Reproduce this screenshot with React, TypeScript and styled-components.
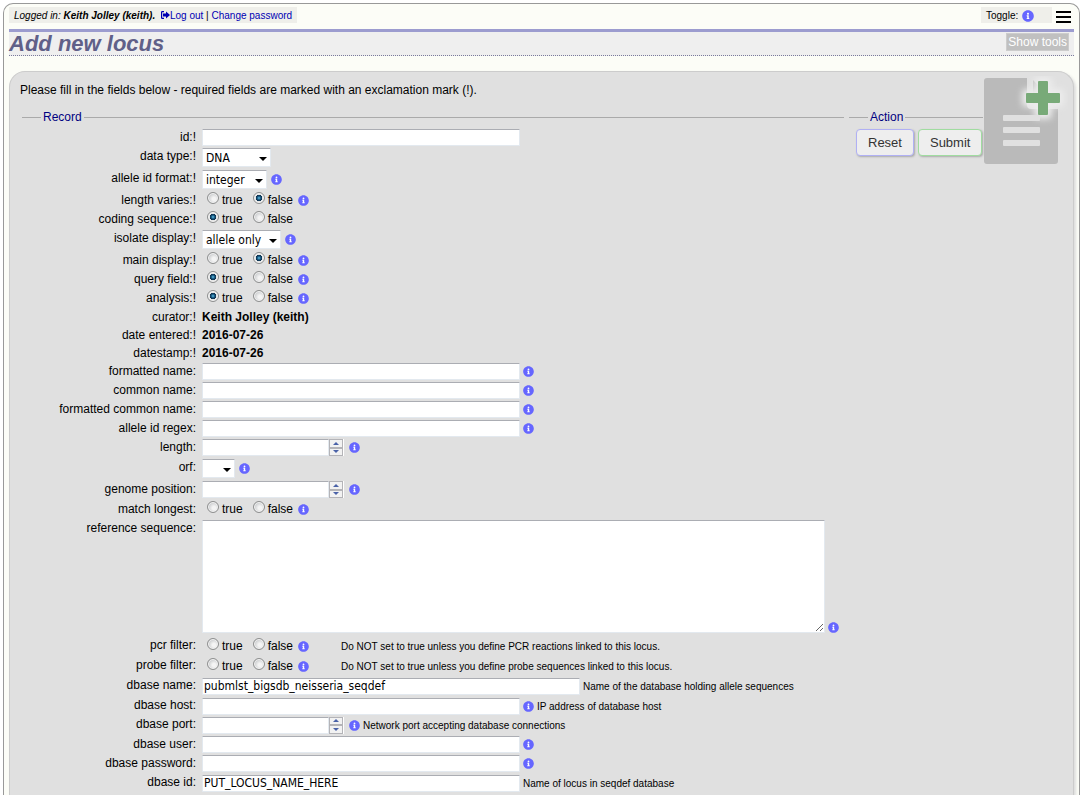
import React from "react";
import styled, { createGlobalStyle, css } from "styled-components";
import { FaInfoCircle } from "react-icons/fa";

const GlobalStyle = createGlobalStyle`
  *, *::before, *::after { box-sizing: border-box; }
  body {
    margin: 0;
    background: #fff;
    color: #000;
    font-family: "Liberation Sans", Arial, sans-serif;
    font-size: 12px;
    line-height: 16px;
  }
`;

const Frame = styled.div`
  display: flex;
  flex-direction: column;
  min-height: calc(100vh - 3px);
  margin: 3px 3px 0;
  padding: 3px 5px 0;
  background: #fcfdf7;
  border: 1px solid #999;
  border-bottom: 0;
  border-radius: 10px 10px 0 0;
`;

const TopBar = styled.div`
  display: flex;
  align-items: flex-start;
  height: 22px;
  font-size: 10px;
`;

const Chip = styled.div`
  height: 16px;
  padding: 0 5px;
  background: #efefea;
  line-height: 18px;
  white-space: nowrap;
`;

const ToggleChip = styled(Chip)`
  display: flex;
  align-items: center;
  gap: 4px;
  width: 71px;
  margin-left: auto;
  padding-top: 2px;
`;

const TopLink = styled.a`
  color: #0000b4;
  text-decoration: none;
  svg { margin-left: 3px; }
`;

const MenuButton = styled.button`
  width: 16px;
  height: 16px;
  margin: 2px 2px 0 4px;
  padding: 0;
  border: 0;
  background: none;
  svg { display: block; }
`;

const TitleBar = styled.header`
  display: flex;
  justify-content: space-between;
  align-items: flex-start;
  height: 27px;
  background: #efefef;
  border-top: 3px solid #9c9ccf;
  border-bottom: 1px dotted #7a7a9c;
`;

const Title = styled.h1`
  margin: 0;
  color: #606088;
  font-size: 22px;
  line-height: 24px;
  font-style: italic;
`;

const ToolsButton = styled.button`
  height: 18px;
  margin: 1px 5px 0 0;
  padding: 0 1px;
  border: 1px solid #ccc;
  background: #c0c0c0;
  color: #fff;
  font: inherit;
`;

const Box = styled.main`
  position: relative;
  flex: 1;
  margin-top: 15px;
  padding: 10px 10px 0;
  background: #e0e0e0;
  border: 1px solid #ccc;
  border-bottom: 0;
  border-radius: 16px 16px 0 0;
  box-shadow: 2px 2px 3px #ddd;
`;

const Intro = styled.p`
  margin: 0 0 11px;
`;

const Columns = styled.form`
  display: flex;
  align-items: flex-start;
  gap: 5px;
  padding-left: 2px;
`;

const Fieldset = styled.fieldset`
  min-width: 0;
  margin: 0;
  padding: 4px 5px 2px 0;
  border: 0;
  border-top: 1px solid #aaa;
`;

const ActionSet = styled(Fieldset)`
  display: flex;
  gap: 4px;
  padding: 4px 1px 4px 7px;
`;

const Legend = styled.legend<{ $indent: number }>`
  margin-left: ${(p) => p.$indent}px;
  padding: 0 2px;
  color: #000080;
`;

const ActionButton = styled.button<{ $edge: string }>`
  height: 27px;
  padding: 0 11px;
  background: #eee;
  border: 1px solid ${(p) => p.$edge};
  border-radius: 4px;
  box-shadow: 1px 1px 2px #aaa;
  color: #333;
  font: 13px "Liberation Sans", Arial, sans-serif;
`;

const PageIcon = styled.svg`
  position: absolute;
  top: 4px;
  right: 5px;
`;

const List = styled.ul`
  margin: 0;
  padding: 0;
  list-style: none;
`;

const rowHeights = { text: 18, input: 19, radio: 19, number: 20, note: 20, select: 22, area: 117 };
type Kind = keyof typeof rowHeights;

const Row = styled.li<{ $kind: Kind }>`
  display: flex;
  align-items: flex-start;
  gap: 6px;
  height: ${(p) => rowHeights[p.$kind]}px;
`;

const labelStyle = css`
  flex: none;
  width: 174px;
  text-align: right;
`;
const Label = styled.label`${labelStyle}`;
const Caption = styled.span`${labelStyle}`;

const Control = styled.div<{ $end?: boolean }>`
  display: flex;
  align-items: ${(p) => (p.$end ? "flex-end" : "center")};
  gap: 3px;
`;

const fieldStyle = css`
  margin: 0;
  border: 1px solid #e3e9ef;
  border-top-color: #abadb3;
  border-radius: 1px;
  background: #fff;
  color: #000;
  font: 12px "DejaVu Sans Condensed", Tahoma, sans-serif;
  outline: 0;
`;

const TextBox = styled.input<{ $wide?: boolean }>`
  ${fieldStyle}
  width: ${(p) => (p.$wide ? 378 : 318)}px;
  height: 17px;
  padding: 0 1px;
`;

const Area = styled.textarea`
  ${fieldStyle}
  display: block;
  width: 623px;
  height: 113px;
`;

const NumberWrap = styled.span`
  display: flex;
  margin-right: 2px;
`;

const NumberBox = styled.input`
  ${fieldStyle}
  width: 127px;
  height: 17px;
  padding: 0 1px;
  appearance: textfield;
  &::-webkit-inner-spin-button { appearance: none; }
`;

const Spinner = styled.span`
  display: flex;
  flex-direction: column;
  width: 15px;
  height: 17px;
  padding-right: 1px;
  background: #fff;
`;

const SpinButton = styled.button`
  display: flex;
  flex: 1;
  align-items: center;
  justify-content: center;
  min-height: 0;
  padding: 0;
  border: 1px solid #b4b4b8;
  background: #f2f2f2;
`;

const SelectWrap = styled.span`
  position: relative;
  display: flex;
  margin-right: 1px;
  &::after {
    content: "";
    position: absolute;
    top: 9px;
    right: 4px;
    border: 4px solid transparent;
    border-top-color: #000;
    border-bottom: 0;
    pointer-events: none;
  }
`;

const Select = styled.select<{ $width: number }>`
  ${fieldStyle}
  appearance: none;
  width: ${(p) => p.$width}px;
  height: 19px;
  padding: 0 3px;
`;

const Choice = styled.label`
  display: inline-flex;
  align-items: center;
  gap: 3px;
  height: 16px;
  margin-left: 5px;
  padding-right: 2px;
`;

const Radio = styled.input`
  appearance: none;
  width: 12px;
  height: 12px;
  margin: 0 0 4px;
  border: 1px solid #8e8f8f;
  border-radius: 50%;
  background: radial-gradient(circle at 60% 60%, #f4f4f4 20%, #c4c6c8 75%);
  box-shadow: inset 0 0 0 1px #f4f4f4;
  &:checked {
    background: radial-gradient(circle at 50% 50%, #5fc3ea 0, #17547c 25%, #0b2f4c 42%, #e4e4e4 50%);
  }
`;

const Value = styled.strong``;

const Note = styled.span<{ $far?: boolean }>`
  margin-left: ${(p) => (p.$far ? 29 : 0)}px;
  padding-top: 2px;
  font-size: 10px;
  line-height: 16px;
  white-space: nowrap;
`;

const InfoButton = styled.button`
  display: flex;
  padding: 0;
  border: 0;
  border-radius: 50%;
  background: radial-gradient(circle, #fff 50%, transparent 55%);
  color: #66f;
`;

const Info = ({ size = 11 }: { size?: number }) => (
  <InfoButton type="button" aria-label="Information">
    <FaInfoCircle size={size} />
  </InfoButton>
);

type RowData = {
  label: string;
  kind: Kind;
  tall?: boolean;
  wide?: boolean;
  info?: boolean;
  note?: string;
  value?: string;
  width?: number;
};

const rows: RowData[] = [
  { label: "id:!", kind: "input" },
  { label: "data type:!", kind: "select", value: "DNA", width: 69 },
  { label: "allele id format:!", kind: "select", value: "integer", width: 65, info: true },
  { label: "length varies:!", kind: "radio", value: "false", info: true },
  { label: "coding sequence:!", kind: "radio", value: "true" },
  { label: "isolate display:!", kind: "select", value: "allele only", width: 79, info: true },
  { label: "main display:!", kind: "radio", value: "false", info: true },
  { label: "query field:!", kind: "radio", value: "true", info: true },
  { label: "analysis:!", kind: "radio", value: "true", info: true },
  { label: "curator:!", kind: "text", value: "Keith Jolley (keith)" },
  { label: "date entered:!", kind: "text", value: "2016-07-26" },
  { label: "datestamp:!", kind: "text", value: "2016-07-26" },
  { label: "formatted name:", kind: "input", info: true },
  { label: "common name:", kind: "input", info: true },
  { label: "formatted common name:", kind: "input", info: true },
  { label: "allele id regex:", kind: "input", info: true },
  { label: "length:", kind: "number", info: true },
  { label: "orf:", kind: "select", value: "", width: 33, info: true },
  { label: "genome position:", kind: "number", info: true },
  { label: "match longest:", kind: "radio", info: true },
  { label: "reference sequence:", kind: "area", info: true },
  { label: "pcr filter:", kind: "radio", tall: true, info: true, note: "Do NOT set to true unless you define PCR reactions linked to this locus." },
  { label: "probe filter:", kind: "radio", tall: true, info: true, note: "Do NOT set to true unless you define probe sequences linked to this locus." },
  { label: "dbase name:", kind: "input", tall: true, wide: true, value: "pubmlst_bigsdb_neisseria_seqdef", note: "Name of the database holding allele sequences" },
  { label: "dbase host:", kind: "input", info: true, note: "IP address of database host" },
  { label: "dbase port:", kind: "number", info: true, note: "Network port accepting database connections" },
  { label: "dbase user:", kind: "input", info: true },
  { label: "dbase password:", kind: "input", info: true },
  { label: "dbase id:", kind: "input", value: "PUT_LOCUS_NAME_HERE", note: "Name of locus in seqdef database" },
];

const Arrow = ({ up }: { up?: boolean }) => (
  <svg width="6" height="3" viewBox="0 0 6 3" aria-hidden="true">
    <path d={up ? "M0 3L3 0L6 3Z" : "M0 0L3 3L6 0Z"} fill="#4a62a8" />
  </svg>
);

function FieldControl({ row, id }: { row: RowData; id: string }) {
  switch (row.kind) {
    case "select":
      return (
        <SelectWrap>
          <Select id={id} $width={row.width ?? 69} defaultValue={row.value}>
            <option value={row.value}>{row.value}</option>
          </Select>
        </SelectWrap>
      );
    case "radio":
      return (
        <>
          {["true", "false"].map((option) => (
            <Choice key={option}>
              <Radio type="radio" name={id} value={option} defaultChecked={row.value === option} />
              {option}
            </Choice>
          ))}
        </>
      );
    case "number":
      return (
        <NumberWrap>
          <NumberBox id={id} type="number" />
          <Spinner>
            <SpinButton type="button" aria-label="Increase"><Arrow up /></SpinButton>
            <SpinButton type="button" aria-label="Decrease"><Arrow /></SpinButton>
          </Spinner>
        </NumberWrap>
      );
    case "area":
      return <Area id={id} />;
    case "text":
      return <Value>{row.value}</Value>;
    default:
      return <TextBox id={id} type="text" $wide={row.wide} defaultValue={row.value} />;
  }
}

function FieldRow({ row }: { row: RowData }) {
  const id = row.label.replace(/[^a-z]+/g, "_");
  const grouped = row.kind === "radio" || row.kind === "text";
  return (
    <Row $kind={row.tall ? "note" : row.kind}>
      {grouped ? <Caption>{row.label}</Caption> : <Label htmlFor={id}>{row.label}</Label>}
      <Control $end={row.kind === "area"}>
        <FieldControl row={row} id={id} />
        {row.info && <Info />}
        {row.note && <Note $far={row.kind === "radio"}>{row.note}</Note>}
      </Control>
    </Row>
  );
}

export default function App() {
  return (
    <>
      <GlobalStyle />
      <Frame>
        <TopBar>
          <Chip>
            <i>Logged in: <b>Keith Jolley (keith).</b></i>{" "}
            <TopLink href="#logout">
              <svg width="9" height="8" viewBox="0 0 9 8" aria-hidden="true">
                <path d="M3 .7H1.2Q.6 .7 .6 1.3V6.7Q.6 7.3 1.2 7.3H3" fill="none" stroke="currentColor" strokeWidth="1.2" />
                <path d="M2 2.6H5V.4L9 4L5 7.6V5.4H2Z" fill="currentColor" />
              </svg>
              Log out
            </TopLink>
            {" | "}
            <TopLink href="#password">Change password</TopLink>
          </Chip>
          <ToggleChip>Toggle: <Info size={12} /></ToggleChip>
          <MenuButton type="button" aria-label="Menu">
            <svg width="16" height="14" viewBox="0 0 16 14">
              <path d="M0 2H15M0 7H15M0 12H15" stroke="#000" strokeWidth="2" />
            </svg>
          </MenuButton>
        </TopBar>
        <TitleBar>
          <Title>Add new locus</Title>
          <ToolsButton type="button">Show tools</ToolsButton>
        </TitleBar>
        <Box>
          <PageIcon width="90" height="96" viewBox="0 0 90 96" aria-hidden="true">
            <defs>
              <filter id="glow" x="-60%" y="-60%" width="220%" height="220%">
                <feGaussianBlur stdDeviation="3" />
              </filter>
            </defs>
            <path d="M9 2H49V29Q49 33 53 33H80V85Q80 88 77 88H9Q6 88 6 85V5Q6 2 9 2Z" fill="#bababa" />
            <path d="M55 4L78 28H55Z" fill="#bababa" />
            <path d="M60 5H70V17H82V27H70V39H60V27H48V17H60Z" fill="#ececec" stroke="#ececec" strokeWidth="8" strokeLinejoin="round" filter="url(#glow)" />
            <g fill="#e0e0e0">
              <rect x="25" y="39" width="37" height="6" rx="1" />
              <rect x="25" y="51" width="37" height="6" rx="1" />
              <rect x="25" y="64" width="37" height="6" rx="1" />
            </g>
            <path d="M61 5H69Q70 5 70 6V17H81Q82 17 82 18V26Q82 27 81 27H70V38Q70 39 69 39H61Q60 39 60 38V27H49Q48 27 48 26V18Q48 17 49 17H60V6Q60 5 61 5Z" fill="#78aa78" />
          </PageIcon>
          <Intro>Please fill in the fields below - required fields are marked with an exclamation mark (!).</Intro>
          <Columns onSubmit={(e) => e.preventDefault()}>
            <Fieldset>
              <Legend $indent={19}>Record</Legend>
              <List>
                {rows.map((row) => (
                  <FieldRow key={row.label} row={row} />
                ))}
              </List>
            </Fieldset>
            <ActionSet>
              <Legend $indent={12}>Action</Legend>
              <ActionButton type="reset" $edge="#b0b0f4">Reset</ActionButton>
              <ActionButton type="submit" $edge="#a0dca0">Submit</ActionButton>
            </ActionSet>
          </Columns>
        </Box>
      </Frame>
    </>
  );
}
